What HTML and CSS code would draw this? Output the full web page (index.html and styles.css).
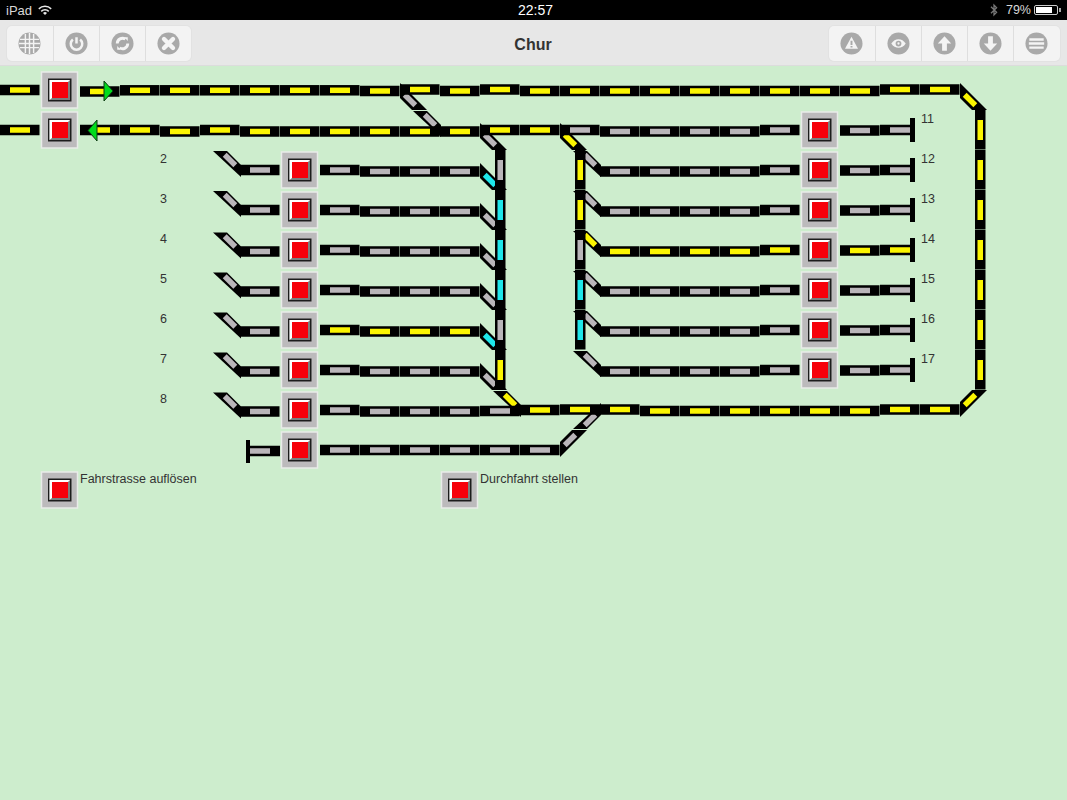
FILE: index.html
```html
<!DOCTYPE html>
<html lang="en">
<head>
  <meta charset="UTF-8">
  <title>Chur</title>
  <link rel="stylesheet" href="styles.css">
</head>
<body>
<div class="statusbar">
  <div class="status-left">
    <span>iPad</span>
    <svg class="wifi" viewBox="0 0 14 10">
      <path d="M0.3 3.300a9.600 9.600 0 0 1 13.400 0l-1 1.200a8 8 0 0 0-11.400 0z"/>
      <path d="M2.700 5.700a6.200 6.200 0 0 1 8.600 0l-1.100 1.200a4.600 4.600 0 0 0-6.400 0z"/>
      <path d="M5 8a3 3 0 0 1 4 0L7 10z"/>
    </svg>
  </div>
  <div class="status-time">22:57</div>
  <div class="status-right">
    <svg class="bluetooth" viewBox="0 0 8 14">
      <path d="M1 3.800l5.600 5.500L4 12V2l2.600 2.700L1 10.200"/>
    </svg>
    <span>79%</span>
    <div class="battery"><div class="battery-fill"></div></div>
    <div class="battery-nub"></div>
  </div>
</div>

<header class="toolbar">
  <div class="btn-group">
    <a class="tool-btn">
      <svg viewBox="0 0 24 24">
        <circle class="disc" cx="12" cy="12" r="11.500"/>
        <path class="glyph-line thin" d="M7.700 2v20M12 1v22M16.300 2v20M2 7.700h20M1 12h22M2 16.300h20"/>
      </svg>
    </a>
    <a class="tool-btn">
      <svg viewBox="0 0 24 24">
        <circle class="disc" cx="12" cy="12" r="11.500"/>
        <path class="glyph-line" d="M8.200 7.800a6 6 0 1 0 7.600 0M12 5.500v6.500"/>
      </svg>
    </a>
    <a class="tool-btn">
      <svg viewBox="0 0 24 24">
        <circle class="disc" cx="12" cy="12" r="11.500"/>
        <path class="glyph-line bold" d="M6.500 12a5.500 5.500 0 0 1 8.500-4.600M17.500 12a5.500 5.500 0 0 1-8.500 4.600"/>
        <path class="glyph" d="M14 5.500h3.500v3.800zM10 18.500H6.500v-3.800z"/>
      </svg>
    </a>
    <a class="tool-btn">
      <svg viewBox="0 0 24 24">
        <circle class="disc" cx="12" cy="12" r="11.500"/>
        <path class="glyph-line wide" d="M7.300 7.300l9.400 9.400M16.700 7.300l-9.400 9.400"/>
      </svg>
    </a>
  </div>
  <h1 class="title">Chur</h1>
  <div class="btn-group right">
    <a class="tool-btn">
      <svg viewBox="0 0 24 24">
        <circle class="disc" cx="12" cy="12" r="11.500"/>
        <path class="glyph" d="M12 5l6.800 12.500H5.200z"/>
        <path class="mark" d="M11 9h2v4.500h-2zM11 14.500h2v1.800h-2z"/>
      </svg>
    </a>
    <a class="tool-btn">
      <svg viewBox="0 0 24 24">
        <circle class="disc" cx="12" cy="12" r="11.500"/>
        <path class="glyph" d="M4.500 12c2-3 4.500-4.500 7.500-4.500s5.500 1.500 7.500 4.500c-2 3-4.500 4.500-7.500 4.500S6.500 15 4.500 12z"/>
        <circle class="mark" cx="12" cy="12" r="3"/>
        <circle class="glyph" cx="12" cy="12" r="1.200"/>
      </svg>
    </a>
    <a class="tool-btn">
      <svg viewBox="0 0 24 24">
        <circle class="disc" cx="12" cy="12" r="11.500"/>
        <path class="glyph" d="M12 4.500l7 7.500h-4.500v7.500h-5V12H5z"/>
      </svg>
    </a>
    <a class="tool-btn">
      <svg viewBox="0 0 24 24">
        <circle class="disc" cx="12" cy="12" r="11.500"/>
        <path class="glyph" d="M12 19.500L5 12h4.500V4.500h5V12H19z"/>
      </svg>
    </a>
    <a class="tool-btn">
      <svg viewBox="0 0 24 24">
        <circle class="disc" cx="12" cy="12" r="11.500"/>
        <path class="glyph-line" d="M4.500 7.700h15M4 12h16M4.500 16.300h15"/>
      </svg>
    </a>
  </div>
</header>

<main class="plan" id="plan">
  <svg class="plan-svg" id="plan-svg" viewBox="0 66 1067 734"></svg>
</main>

<script src="plan.js"></script>
</body>
</html>
```

FILE: styles.css
```css
html, body { margin: 0; padding: 0; height: 100%; }
body {
  font-family: 'Liberation Sans', Arial, sans-serif;
  background: #cdedcd;
  color: #333;
  display: flex;
  flex-direction: column;
  overflow: hidden;
}

.statusbar {
  height: 20px;
  flex: none;
  background: #000;
  color: #d8d8d8;
  font-size: 13px;
  display: grid;
  grid-template-columns: 1fr auto 1fr;
  align-items: center;
  padding: 0 6px;
  box-sizing: border-box;
}
.status-left { display: flex; align-items: center; gap: 6px; }
.status-time { color: #fff; font-size: 14px; padding-left: 4px; }
.status-right { display: flex; align-items: center; justify-content: flex-end; font-size: 12.500px; }
.wifi { width: 14px; height: 10px; fill: #e8e8e8; }
.bluetooth {
  width: 8px;
  height: 14px;
  fill: none;
  stroke: #777;
  stroke-width: 1.300;
  margin-right: 8px;
}
.battery {
  width: 24px;
  height: 10px;
  border: 1px solid #ccc;
  border-radius: 2px;
  box-sizing: border-box;
  padding: 1px;
  margin-left: 3px;
}
.battery-fill { width: 79%; height: 100%; background: #fff; }
.battery-nub { width: 2px; height: 4px; background: #aaa; margin-left: 1px; }

.toolbar {
  height: 46px;
  flex: none;
  box-sizing: border-box;
  background: #e7e7e7;
  border-bottom: 1px solid #dcdcdc;
  padding: 6px 7.500px 0 6.500px;
  display: grid;
  grid-template-columns: 1fr auto 1fr;
  align-items: start;
}
.btn-group {
  display: inline-flex;
  justify-self: start;
  height: 35px;
  background: #f3f3f3;
  box-shadow: 0 0 0 1px #e2e2e2;
  border-radius: 5px;
}
.btn-group.right { justify-self: end; }
.tool-btn {
  width: 46.200px;
  display: flex;
  align-items: center;
  justify-content: center;
  border-left: 1px solid #dedede;
  box-sizing: border-box;
}
.tool-btn:first-child { border-left: none; }
.tool-btn svg { width: 23px; height: 23px; }
.disc { fill: #a9a9a9; }
.glyph { fill: #f4f4f4; }
.mark { fill: #a9a9a9; }
.glyph-line { fill: none; stroke: #f4f4f4; stroke-width: 2.600; }
.glyph-line.thin { stroke-width: 1.500; }
.glyph-line.bold { stroke-width: 3; }
.glyph-line.wide { stroke-width: 4.600; stroke-linecap: round; }
.title {
  margin: 0;
  font-size: 16px;
  font-weight: bold;
  line-height: 37px;
  color: #333;
}

.plan { position: relative; flex: 1; }
.plan-svg { display: block; width: 1067px; height: 734px; }
.plan-label {
  position: absolute;
  font-size: 12.500px;
  line-height: 14px;
  color: #333;
  white-space: nowrap;
}

.rail { fill: #000; }
.lamp-yellow { fill: #fbf500; }
.lamp-gray { fill: #b9b5b9; }
.lamp-cyan { fill: #1ee6ea; }
.arrow { fill: #00dc1c; stroke: #0a3a10; stroke-width: 1; }
.sig-plate { fill: #bcbabc; stroke: #e9ebe9; stroke-width: 1.500; }
.sig-frame { fill: #1c1c1c; }
.sig-shade { fill: #7c7c7c; }
.sig-light { fill: #fff; }
.sig-red { fill: #f6000a; }
```

FILE: plan.js
```js
const Y = 'yellow', G = 'gray', C = 'cyan';
let out = '';

// straight piece, 40px tile
function straight(x, y, color) {
  out += `<rect class="rail" x="${x}" y="${y - 5.25}" width="39.5" height="10.5"/>`;
  out += `<rect class="lamp-${color}" x="${x + 10}" y="${y - 2.75}" width="20" height="5.5"/>`;
}

function vertical(x, y, color) {
  const cx = x + 20;
  out += `<rect class="rail" x="${cx - 5}" y="${y - 20}" width="10.5" height="39.5"/>`;
  out += `<rect class="lamp-${color}" x="${cx - 2.5}" y="${y - 10}" width="5.5" height="20"/>`;
}

// diagonal pieces: dt/db go down to the right, ut/ub go up to the right
const DIAG = {
  dt: { pts: [[0, -7], [27, 20], [12, 20], [0, 8]], lamp: [10, 10], rot: 45 },
  db: { pts: [[13, -19], [27, -19], [41, -5], [41, 7]], lamp: [30, -10], rot: 45 },
  ut: { pts: [[0, 7], [27, -20], [12, -20], [0, -8]], lamp: [10, -10], rot: -45 },
  ub: { pts: [[13, 19], [27, 19], [41, 5], [41, -7]], lamp: [30, 10], rot: -45 }
};

function diag(x, y, kind, color) {
  const d = DIAG[kind];
  const pts = d.pts.map(p => `${x + p[0]},${y + p[1]}`).join(' ');
  const lx = x + d.lamp[0], ly = y + d.lamp[1];
  out += `<polygon class="rail" points="${pts}"/>`;
  out += `<rect class="lamp-${color}" x="${lx - 7.5}" y="${ly - 2.75}" width="15" height="5.5" transform="rotate(${d.rot} ${lx} ${ly})"/>`;
}

function signal(x, y) {
  const cx = x + 20;
  out += `<rect class="sig-plate" x="${cx - 18.5}" y="${y - 18}" width="36" height="36"/>`;
  out += `<rect class="sig-frame" x="${cx - 12}" y="${y - 11.5}" width="23.5" height="23"/>`;
  out += `<rect class="sig-shade" x="${cx - 10.5}" y="${y - 10}" width="20.5" height="20"/>`;
  out += `<polygon class="sig-light" points="${cx - 10.5},${y - 10} ${cx + 10},${y - 10} ${cx + 8},${y - 8} ${cx - 8},${y - 8} ${cx - 8},${y + 8} ${cx - 10.5},${y + 10}"/>`;
  out += `<rect class="sig-red" x="${cx - 8}" y="${y - 8}" width="16" height="16"/>`;
}

function stopRight(x, y, color) {
  out += `<rect class="rail" x="${x}" y="${y - 5.25}" width="31" height="10.5"/>`;
  out += `<rect class="lamp-${color}" x="${x + 10}" y="${y - 2.75}" width="20" height="5.5"/>`;
  out += `<rect class="rail" x="${x + 30}" y="${y - 12}" width="5" height="24"/>`;
}

function stopLeft(x, y, color) {
  out += `<rect class="rail" x="${x + 6}" y="${y - 11}" width="4" height="23"/>`;
  out += `<rect class="rail" x="${x + 9}" y="${y - 5.25}" width="31" height="10.5"/>`;
  out += `<rect class="lamp-${color}" x="${x + 10}" y="${y - 2.75}" width="20" height="5.5"/>`;
}

function arrow(points) {
  out += `<polygon class="arrow" points="${points}"/>`;
}

// top through track
straight(0, 90, Y);
signal(40, 90);
straight(80, 91.5, Y);
[120, 160, 200, 240, 280, 320].forEach(x => straight(x, 90.3, Y));
straight(360, 91, Y);
diag(400, 90, 'dt', G);
straight(400, 89.5, Y);
straight(440, 91, Y);
straight(480, 89.5, Y);
[520, 560, 600, 640, 680, 720, 760, 800, 840].forEach(x => straight(x, 91, Y));
straight(880, 89.5, Y);
straight(920, 89.5, Y);
diag(960, 90, 'dt', Y);
arrow('104,81 113,91 104,101');

// second through track
straight(0, 130, Y);
signal(40, 130);
straight(80, 130, Y);
straight(120, 130, Y);
straight(160, 131.5, Y);
straight(200, 130, Y);
[240, 280, 320, 360].forEach(x => straight(x, 131.5, Y));
diag(400, 130, 'db', G);
straight(400, 131.5, Y);
straight(440, 131.5, Y);
diag(480, 130, 'dt', G);
straight(480, 130, Y);
straight(520, 130, Y);
diag(560, 130, 'dt', Y);
straight(560, 130, G);
arrow('97,120 88,130.5 97,141');

// left station tracks
[170, 210, 250, 290, 330, 370, 410].forEach(y => {
  const lamp = y === 330 ? Y : G;
  const first = y >= 250 ? y + 1.5 : y;
  diag(200, first, 'db', G);
  straight(240, first, G);
  signal(280, y);
  straight(320, y, lamp);
  [360, 400, 440].forEach(x => straight(x, y + 1.5, lamp));
});

// ladder on the left
const ladder = [[170, G, C], [210, C, G], [250, C, G], [290, C, G], [330, G, C], [370, Y, G]];
ladder.forEach(r => {
  diag(480, r[0], 'dt', r[2]);
  vertical(480, r[0], r[1]);
});

// right station tracks
[130, 170, 210, 250, 290, 330, 370].forEach(y => {
  const lamp = y === 250 ? Y : G;
  [600, 640, 680, 720].forEach(x => straight(x, y + 1.5, lamp));
  straight(760, y, lamp);
  signal(800, y);
  straight(840, y + 0.5, lamp);
  stopRight(880, y, lamp);
});

// ladder on the right
[[170, Y, G], [210, Y, G], [250, G, Y], [290, C, G], [330, C, G]].forEach(r => {
  diag(560, r[0], 'db', r[2]);
  vertical(560, r[0], r[1]);
});
diag(560, 370, 'db', G);

// outer loop on the right
[130, 170, 210, 250, 290, 330, 370].forEach(y => vertical(960, y, Y));

// bottom through track
diag(480, 410, 'db', Y);
straight(480, 411, G);
straight(520, 410, Y);
diag(560, 410, 'ub', G);
straight(560, 409.5, Y);
straight(600, 409.5, Y);
[640, 680, 720, 760, 800, 840].forEach(x => straight(x, 411, Y));
straight(880, 409.5, Y);
straight(920, 409.5, Y);
diag(960, 410, 'ut', Y);

// siding at the bottom
stopLeft(240, 451, G);
signal(280, 450);
[320, 360, 400, 440, 480, 520].forEach(x => straight(x, 450, G));
diag(560, 450, 'ut', G);

// route buttons
signal(40, 490);
signal(440, 490);

document.getElementById('plan-svg').innerHTML = out;

// labels, positions in page coordinates
const LABELS = [
  ['2', 160, 152], ['3', 160, 192], ['4', 160, 232], ['5', 160, 272],
  ['6', 160, 312], ['7', 160, 352], ['8', 160, 392],
  ['11', 921, 112], ['12', 921, 152], ['13', 921, 192], ['14', 921, 232],
  ['15', 921, 272], ['16', 921, 312], ['17', 921, 352],
  ['Fahrstrasse auflösen', 80, 472],
  ['Durchfahrt stellen', 480, 472]
];
const plan = document.getElementById('plan');
LABELS.forEach(l => {
  const el = document.createElement('div');
  el.className = 'plan-label';
  el.textContent = l[0];
  el.style.left = l[1] + 'px';
  el.style.top = (l[2] - 66) + 'px';
  plan.appendChild(el);
});
```
